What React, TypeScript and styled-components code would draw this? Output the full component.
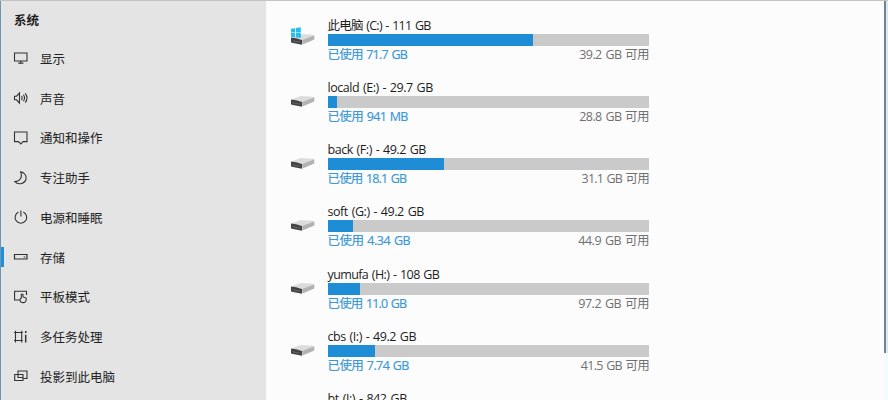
import React from "react";
import styled, { createGlobalStyle } from "styled-components";

const GlobalStyle = createGlobalStyle`
  * { box-sizing: border-box; }
  body { margin: 0; overflow: hidden; }
`;

const Window = styled.div`
  display: flex;
  width: 888px;
  height: 400px;
  overflow: hidden;
  border-top: 1px solid #c3c3c5;
  background: #fcfcfc;
  font-family: "Open Sans", "Noto Sans CJK SC", sans-serif;
  font-size: 12.5px;
  color: #1c1c1c;
`;

const Sidebar = styled.nav`
  width: 266px;
  flex: none;
  border-left: 1px solid #6d96b4;
  background: #e4e4e4;
`;

const SidebarTitle = styled.h1`
  margin: 0;
  height: 37.4px;
  padding-left: 13px;
  font-size: 12.5px;
  line-height: 39px;
  font-weight: 700;
`;

const NavItem = styled.a<{ $active?: boolean }>`
  display: flex;
  align-items: center;
  height: 39.75px;
  white-space: nowrap;
  color: #222;

  &::before {
    content: "";
    width: 3px;
    height: 20px;
    margin-right: 9px;
    background: ${(p) => (p.$active ? "#1f8fd8" : "transparent")};
  }
`;

const NavIcon = styled.svg`
  width: 16px;
  height: 16px;
  margin-right: 11px;
  fill: none;
  stroke: #333;
  stroke-width: 1.1;
`;

const Content = styled.main`
  flex: 1;
  padding: 17px 0 0 24px;
`;

const DriveRow = styled.section`
  display: flex;
  height: 62.15px;
`;

const DriveIcon = styled.svg`
  width: 26px;
  height: 24px;
  flex: none;
  margin: 7px 11.5px 0 0;
`;

const DriveInfo = styled.div`
  width: 321.5px;
`;

const DriveName = styled.div<{ $spacing: number }>`
  height: 16px;
  line-height: 16px;
  white-space: nowrap;
  word-spacing: 1px;
  letter-spacing: ${(p) => p.$spacing}px;
`;

const Track = styled.div`
  height: 12px;
  background: #cacaca;
`;

const Fill = styled.div`
  height: 12px;
  background: #1f8dd6;
`;

const Captions = styled.div`
  display: flex;
  justify-content: space-between;
  height: 18px;
  line-height: 18px;
  white-space: nowrap;
`;

const Used = styled.span<{ $spacing: number }>`
  color: #3b98d8;
  -webkit-text-stroke: 0.2px #3b98d8;
  word-spacing: 1px;
  letter-spacing: ${(p) => p.$spacing}px;
`;

const Free = styled.span<{ $spacing: number }>`
  color: #707070;
  word-spacing: 1px;
  letter-spacing: ${(p) => p.$spacing}px;
`;

const Edge = styled.aside`
  width: 4px;
  flex: none;
  background: #f2fbfd;
`;

const ScrollThumb = styled.div`
  height: 352px;
  border-left: 2px solid #74838f;
  background: #dbe9f2;
`;

const navItems: { label: string; active?: boolean; icon: React.ReactNode }[] = [
  { label: "显示", icon: <path d="M1.500 3h12.500v8h-12.500zM7.800 11v2M5.200 13.100h5.200" /> },
  {
    label: "声音",
    icon: <path d="M1.500 6.200h2L6.500 3v10L3.500 9.800h-2zM8.500 6q1.300 2 0 4M10.400 4.700q2.300 3.300 0 6.600M12.200 3.300q3.600 4.700 0 9.400" />,
  },
  { label: "通知和操作", icon: <path d="M1.500 2h12.500v9.600h-4L7.800 14l-2.300-2.400h-4z" /> },
  { label: "专注助手", icon: <path d="M7.600 1.900c3.400.6 5.800 3.200 5.500 6.500-.4 5-7.800 7.400-11.200 3.200C6.700 11.600 9.900 7.300 7.600 1.900z" /> },
  { label: "电源和睡眠", icon: <path d="M5.500 3.100a5.800 5.800 0 1 0 4.800 0M7.900 1.500v6" /> },
  { label: "存储", active: true, icon: <path d="M1.500 5.500h12.500v4.500h-12.500zM10.700 8h1.600" strokeWidth="1.200" /> },
  {
    label: "平板模式",
    icon: <path d="M6.500 11H1.600V2.200h11.900V6M8.300 9V5.600q.9-1.100 1.700 0v2.300l2.500.8q1 .4.800 1.500c-.3 2.300-1.300 3.400-3.100 3.400-2 0-3.200-1.200-3.200-2.900 0-.800.500-1.400 1.300-1.700z" />,
  },
  {
    label: "多任务处理",
    icon: (
      <>
        <path d="M1 3.500h8.800M1 11.500h8.800M2.500 1.800v11.700M8.700 1.800v11.700" />
        <path d="M12.700 5.700v7.800M12.700 2v2" strokeWidth="1.500" />
      </>
    ),
  },
  { label: "投影到此电脑", icon: <path d="M5 6.500V3h9v7.500H10M1.700 6.500H10v6H1.700zM5 6.500v3h5" /> },
];

const drives = [
  { name: "此电脑 (C:) - 111 GB", used: "71.7 GB", free: "39.2 GB", fill: 64, nameGap: -0.74, usedGap: -0.76, freeGap: -0.56, system: true },
  { name: "locald (E:) - 29.7 GB", used: "941 MB", free: "28.8 GB", fill: 3.1, nameGap: -0.46, usedGap: -0.65, freeGap: -0.56 },
  { name: "back (F:) - 49.2 GB", used: "18.1 GB", free: "31.1 GB", fill: 36.1, nameGap: -0.46, usedGap: -0.84, freeGap: -0.8 },
  { name: "soft (G:) - 49.2 GB", used: "4.34 GB", free: "44.9 GB", fill: 8, nameGap: -0.44, usedGap: -0.48, freeGap: -0.46 },
  { name: "yumufa (H:) - 108 GB", used: "11.0 GB", free: "97.2 GB", fill: 10.1, nameGap: -0.6, usedGap: -0.84, freeGap: -0.46 },
  { name: "cbs (I:) - 49.2 GB", used: "7.74 GB", free: "41.5 GB", fill: 14.9, nameGap: -0.45, usedGap: -0.6, freeGap: -0.72 },
  { name: "bt (J:) - 842 GB", used: "310 GB", free: "532 GB", fill: 36, nameGap: -0.4, usedGap: -0.5, freeGap: -0.5 },
];

function DriveGlyph({ system }: { system?: boolean }) {
  return (
    <DriveIcon viewBox="0 0 26 24">
      <path d="M1 12.500 10.500 9l12.500.8q1.400.2 1.300 1.200L12 15z" fill="#dcdcdc" />
      <path d="M12 15l12.300-4.500v4L12.500 19.600z" fill="#b2b2b2" />
      <path d="M1 12.500q5 .3 11 2.500v4.800L1.800 17.800q-.8-.2-.8-1z" fill="#444" />
      <path d="M2.500 15.800l7.500 1.400" stroke="#6c6c6c" strokeWidth=".8" />
      {system && (
        <path d="M1 3.800l4-.6v4.200H1zM5.800 3.100l5-.8v5.100h-5zM1 8.100h4v4.200l-4-.6zM5.800 8.100h5v5l-5-.8z" fill="#24bdec" />
      )}
    </DriveIcon>
  );
}

export default function App() {
  return (
    <>
      <GlobalStyle />
      <Window>
        <Sidebar>
          <SidebarTitle>系统</SidebarTitle>
          {navItems.map((item) => (
            <NavItem key={item.label} $active={item.active}>
              <NavIcon viewBox="0 0 16 16">{item.icon}</NavIcon>
              {item.label}
            </NavItem>
          ))}
        </Sidebar>
        <Content>
          {drives.map((d) => (
            <DriveRow key={d.name}>
              <DriveGlyph system={d.system} />
              <DriveInfo>
                <DriveName $spacing={d.nameGap}>{d.name}</DriveName>
                <Track>
                  <Fill style={{ width: `${d.fill}%` }} />
                </Track>
                <Captions>
                  <Used $spacing={d.usedGap}>已使用 {d.used}</Used>
                  <Free $spacing={d.freeGap}>{d.free} 可用</Free>
                </Captions>
              </DriveInfo>
            </DriveRow>
          ))}
        </Content>
        <Edge>
          <ScrollThumb />
        </Edge>
      </Window>
    </>
  );
}
